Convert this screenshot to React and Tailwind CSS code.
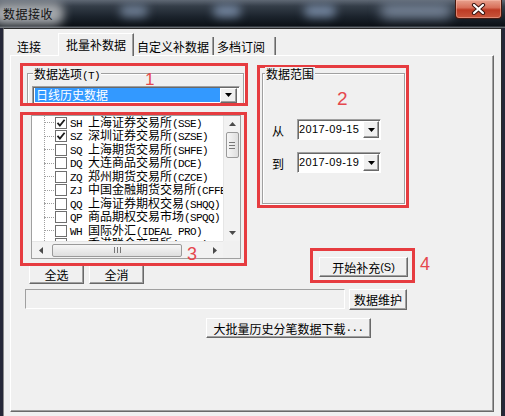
import React from "react";

function Mix({ text }) {
  const parts = text.match(/[\x00-\x7F]+|[^\x00-\x7F]+/g) || [];
  return parts.map((p, i) =>
    /^[\x00-\x7F]/.test(p) ? (
      <span key={i} className="font-['Liberation_Mono',monospace] text-[11px] tracking-[-0.6px] whitespace-pre">
        {p}
      </span>
    ) : (
      <span key={i}>{p}</span>
    )
  );
}

const raised =
  "border border-t-white border-l-white border-r-[#696969] border-b-[#696969] shadow-[inset_-1px_-1px_0_#a0a0a0] bg-[#f0f0f0]";
const sunken =
  "border border-t-[#a0a0a0] border-l-[#a0a0a0] border-r-white border-b-white shadow-[inset_1px_1px_0_#696969]";

function DownTri() {
  return (
    <svg width="7" height="4" viewBox="0 0 7 4">
      <path d="M0 0 L7 0 L3.5 4 Z" fill="#000" />
    </svg>
  );
}

function Btn({ className, children }) {
  return (
    <div className={`${raised} flex items-center justify-center whitespace-nowrap ${className}`}>
      {children}
    </div>
  );
}

function TitleBar() {
  return (
    <div className="relative h-[28px] shrink-0 overflow-hidden flex items-start bg-[linear-gradient(180deg,#5f6874_0%,#343d48_22%,#1b232c_60%,#0c1117_92%,#7d8288_100%)]">
      <div className="absolute left-[-8px] top-[2px] w-[72px] h-[23px] rounded-[10px] bg-[#a3a6aa] blur-[5px]" />
      <div className="absolute left-[120px] top-[5px] w-[28px] h-[12px] rounded-full bg-[#6f7f95] blur-[5px]" />
      <div className="absolute left-[213px] top-[5px] w-[28px] h-[12px] rounded-full bg-[#7688a2] blur-[5px]" />
      <div className="absolute left-[304px] top-[5px] w-[32px] h-[12px] rounded-full bg-[#7688a2] blur-[5px]" />
      <div className="absolute left-[380px] top-[4px] w-[72px] h-[14px] rounded-full bg-[#7a889c] blur-[6px]" />
      <span className="relative pl-[3px] pt-[7px] text-[12px] leading-[14px] tracking-[0.5px] text-[#111]">
        数据接收
      </span>
      <div className="relative ml-auto mr-[3px] w-[47px] h-[19px] rounded-b-[4px] border border-t-0 border-[#45190f] bg-[linear-gradient(180deg,#e8a28f_0%,#d8705a_42%,#bd3b24_55%,#c9563c_100%)] shadow-[inset_0_0_0_1px_rgba(255,200,185,0.45)] flex items-center justify-center">
        <svg width="15" height="12" viewBox="0 0 15 12">
          <path d="M3 2 L12 10 M12 2 L3 10" stroke="#3b1510" strokeWidth="4.2" strokeLinecap="round" />
          <path d="M3 2 L12 10 M12 2 L3 10" stroke="#ffffff" strokeWidth="2.2" strokeLinecap="round" />
        </svg>
      </div>
    </div>
  );
}

function Tabs() {
  return (
    <div className="flex items-end h-[22px]">
      <div className="h-[18px] w-[48px] pl-[7px] pt-[3px]">连接</div>
      <div className="relative z-10 -mb-px h-[23px] w-[76px] pl-[7px] pt-[4px] bg-[#f0f0f0] border-t border-l border-r border-t-white border-l-white border-r-[#696969] shadow-[inset_-1px_0_0_#a0a0a0]">
        批量补数据
      </div>
      <div className="h-[18px] w-[80px] pl-[3px] pt-[3px] border-r border-r-[#696969] shadow-[inset_-1px_0_0_#a0a0a0]">
        自定义补数据
      </div>
      <div className="h-[18px] w-[62px] pl-[3px] pt-[3px] border-r border-r-[#696969] shadow-[inset_-1px_0_0_#a0a0a0]">
        多档订阅
      </div>
    </div>
  );
}

const Num = ({ className, children }) => (
  <span
    className={`absolute z-20 font-['Liberation_Sans',sans-serif] text-[#e5484d] ${className}`}
  >
    {children}
  </span>
);

function Box1() {
  return (
    <div className="relative w-[228px] h-[43px] border-[3px] border-[#e63c40]">
      <div className="w-full h-full overflow-hidden pt-[7px] pl-[4px]">
        <div className="relative w-[217px] h-[40px] border border-[#a0a0a0] shadow-[inset_1px_1px_0_#fff,1px_1px_0_#fff] pt-[12px] pl-[4px]">
          <span className="absolute left-[5px] top-[-7px] bg-[#f0f0f0] px-[1px] leading-[13px]">
            <Mix text="数据选项(T)" />
          </span>
          <div className={`${sunken} w-[208px] h-[18px] bg-white flex items-center p-[2px]`}>
            <div className="flex-1 h-[14px] bg-[#3399ff] text-white leading-[14px] pl-[1px]">日线历史数据</div>
            <div className={`${raised} w-[17px] h-[15px] flex items-center justify-center`}>
              <DownTri />
            </div>
          </div>
        </div>
      </div>
      <Num className="left-[122px] top-[5px] text-[17px] leading-[17px]">1</Num>
    </div>
  );
}

const rows = [
  ["SH 上海证券交易所(SSE)", true],
  ["SZ 深圳证券交易所(SZSE)", true],
  ["SQ 上海期货交易所(SHFE)", false],
  ["DQ 大连商品交易所(DCE)", false],
  ["ZQ 郑州期货交易所(CZCE)", false],
  ["ZJ 中国金融期货交易所(CFFEX)", false],
  ["QQ 上海证券期权交易(SHQQ)", false],
  ["QP 商品期权交易市场(SPQQ)", false],
  ["WH 国际外汇(IDEAL PRO)", false],
  ["HK 香港联合交易所(HKEX)", false],
];

function Check({ on }) {
  return (
    <div className="w-[12px] h-[12px] border border-[#6f6f6f] bg-white shrink-0 flex items-center justify-center">
      {on && (
        <svg width="10" height="10" viewBox="0 0 10 10">
          <path d="M1.5 4.8 L3.9 7.5 L8.6 1.8" stroke="#1b1b1b" strokeWidth="1.8" fill="none" />
        </svg>
      )}
    </div>
  );
}

const Grip = ({ vertical }) =>
  vertical ? (
    <div className="flex flex-col gap-[2px]">
      <div className="w-[6px] h-px bg-[#777]" />
      <div className="w-[6px] h-px bg-[#777]" />
      <div className="w-[6px] h-px bg-[#777]" />
    </div>
  ) : (
    <div className="flex gap-[2px]">
      <div className="w-px h-[6px] bg-[#777]" />
      <div className="w-px h-[6px] bg-[#777]" />
      <div className="w-px h-[6px] bg-[#777]" />
    </div>
  );

function Tree() {
  return (
    <div className="ml-[8px] w-[210px] h-[144px] border border-[#a0a0a0] bg-white flex flex-col">
      <div className="flex h-[125px]">
        <div className="relative w-[191px] shrink-0 h-full overflow-hidden">
          <div className="absolute left-[12px] top-0 bottom-0 border-l border-dotted border-[#a0a0a0]" />
          {rows.map(([t, on], i) => (
            <div key={i} className="flex items-center h-[13.5px] whitespace-nowrap">
              <div className="ml-[12px] w-[10px] shrink-0 border-t border-dotted border-[#a0a0a0]" />
              <div className="ml-[1px] shrink-0">
                <Check on={on} />
              </div>
              <div className="ml-[3px] shrink-0 leading-[13px]">
                <Mix text={t} />
              </div>
            </div>
          ))}
        </div>
        <div className="w-[17px] shrink-0 h-full bg-[#f2f2f2] border-l border-[#e6e6e6] flex flex-col items-center">
          <div className="h-[16px] flex items-center justify-center">
            <svg width="7" height="4" viewBox="0 0 7 4">
              <path d="M0 4 L3.5 0 L7 4 Z" fill="#4a4a4a" />
            </svg>
          </div>
          <div className="w-[13px] h-[26px] rounded-[2px] border border-[#9a9a9a] bg-[linear-gradient(90deg,#f6f6f6,#dedede)] flex items-center justify-center">
            <Grip vertical />
          </div>
          <div className="flex-1" />
          <div className="h-[16px] flex items-center justify-center">
            <svg width="7" height="4" viewBox="0 0 7 4">
              <path d="M0 0 L7 0 L3.5 4 Z" fill="#4a4a4a" />
            </svg>
          </div>
        </div>
      </div>
      <div className="flex h-[17px]">
        <div className="w-[191px] shrink-0 h-full bg-[#f2f2f2] border-t border-[#e6e6e6] flex items-center">
          <div className="w-[17px] h-full flex items-center justify-center">
            <svg width="4" height="7" viewBox="0 0 4 7">
              <path d="M4 0 L0 3.5 L4 7 Z" fill="#4a4a4a" />
            </svg>
          </div>
          <div className="ml-[3px] w-[130px] h-[13px] rounded-[2px] border border-[#9a9a9a] bg-[linear-gradient(180deg,#f6f6f6,#dedede)] flex items-center justify-center">
            <Grip />
          </div>
          <div className="flex-1" />
          <div className="w-[17px] h-full flex items-center justify-center">
            <svg width="4" height="7" viewBox="0 0 4 7">
              <path d="M0 0 L4 3.5 L0 7 Z" fill="#4a4a4a" />
            </svg>
          </div>
        </div>
        <div className="w-[17px] h-full bg-[#f0f0f0]" />
      </div>
    </div>
  );
}

function Box3() {
  return (
    <div className="relative z-10 mt-[6px] w-[227px] h-[154px] border-[3px] border-[#e63c40]">
      <Tree />
      <Num className="left-[164px] top-[130px] text-[18px] leading-[18px]">3</Num>
    </div>
  );
}

function DatePick({ label, value }) {
  return (
    <div className="flex items-center">
      <div className="w-[25px] pt-[2px] text-[12px]">{label}</div>
      <div className={`${sunken} w-[84px] h-[21px] bg-white flex items-center pl-[1px] pr-[1px]`}>
        <span className="flex-1 font-['Liberation_Sans',sans-serif] text-[11px] leading-[13px] tracking-[0.4px]">
          {value}
        </span>
        <div className={`${raised} w-[16px] h-[17px] flex items-center justify-center`}>
          <DownTri />
        </div>
      </div>
    </div>
  );
}

function Box2() {
  return (
    <div className="w-[152px] h-[143px] border-[3px] border-[#e63c40] pt-[5px] pl-[2px]">
      <div className="relative w-[143px] h-[131px] border border-[#a0a0a0] shadow-[inset_1px_1px_0_#fff,1px_1px_0_#fff] pt-[45px] pl-[9px] flex flex-col">
        <span className="absolute left-[2px] top-[-7px] bg-[#f0f0f0] px-[1px] leading-[13px]">数据范围</span>
        <Num className="left-[74px] top-[15px] text-[19px] leading-[19px]">2</Num>
        <DatePick label="从" value="2017-09-15" />
        <div className="mt-[12px]">
          <DatePick label="到" value="2017-09-19" />
        </div>
      </div>
    </div>
  );
}

function Box4() {
  return (
    <div className="relative mt-[40px] ml-[53px] w-[105px] h-[35px] border-[3px] border-[#e63c40] pt-[6px] pl-[6px]">
      <Btn className="w-[89px] h-[20px]">
        <span>开始补充</span>
        <span className="font-['Liberation_Sans',sans-serif] text-[11px]">(S)</span>
      </Btn>
      <Num className="left-[107px] top-[4px] text-[18px] leading-[18px]">4</Num>
    </div>
  );
}

function Panel() {
  return (
    <div className="w-[484px] h-[357px] border border-t-white border-l-white border-r-[#696969] border-b-[#696969] shadow-[inset_-1px_-1px_0_#a0a0a0] pt-[7px] pl-[9px] flex flex-col">
      <div className="flex items-start">
        <div className="flex flex-col w-[228px]">
          <Box1 />
          <Box3 />
          <div className="flex gap-[5px] ml-[9px] -mt-[1px]">
            <Btn className="w-[55px] h-[19px]">全选</Btn>
            <Btn className="w-[55px] h-[19px]">全消</Btn>
          </div>
        </div>
        <div className="flex flex-col ml-[9px] mt-[2px]">
          <Box2 />
          <Box4 />
        </div>
      </div>
      <div className="flex items-start mt-[5px] ml-[5px] gap-[4px]">
        <div className="w-[320px] h-[20px] border border-t-[#a0a0a0] border-l-[#a0a0a0] border-r-white border-b-white bg-[#f0f0f0]" />
        <Btn className="w-[58px] h-[21px]">数据维护</Btn>
      </div>
      <div className="mt-[8px] ml-[186px]">
        <Btn className="w-[165px] h-[20px]">
          <Mix text="大批量历史分笔数据下载..." />
        </Btn>
      </div>
    </div>
  );
}

export default function App() {
  return (
    <div className="w-[505px] h-[416px] overflow-hidden bg-[#262838] flex flex-col font-['Noto_Sans_CJK_SC',sans-serif] text-[12px] leading-[13px] text-black">
      <TitleBar />
      <div className="ml-[3px] w-[499px] h-[388px] shrink-0 bg-[#f0f0f0] border-t border-l border-r border-t-[#2a2a2a] border-l-[#8a8a8a] border-r-[#2a2a2a] pt-[4px] pl-[6px]">
        <Tabs />
        <Panel />
      </div>
    </div>
  );
}
